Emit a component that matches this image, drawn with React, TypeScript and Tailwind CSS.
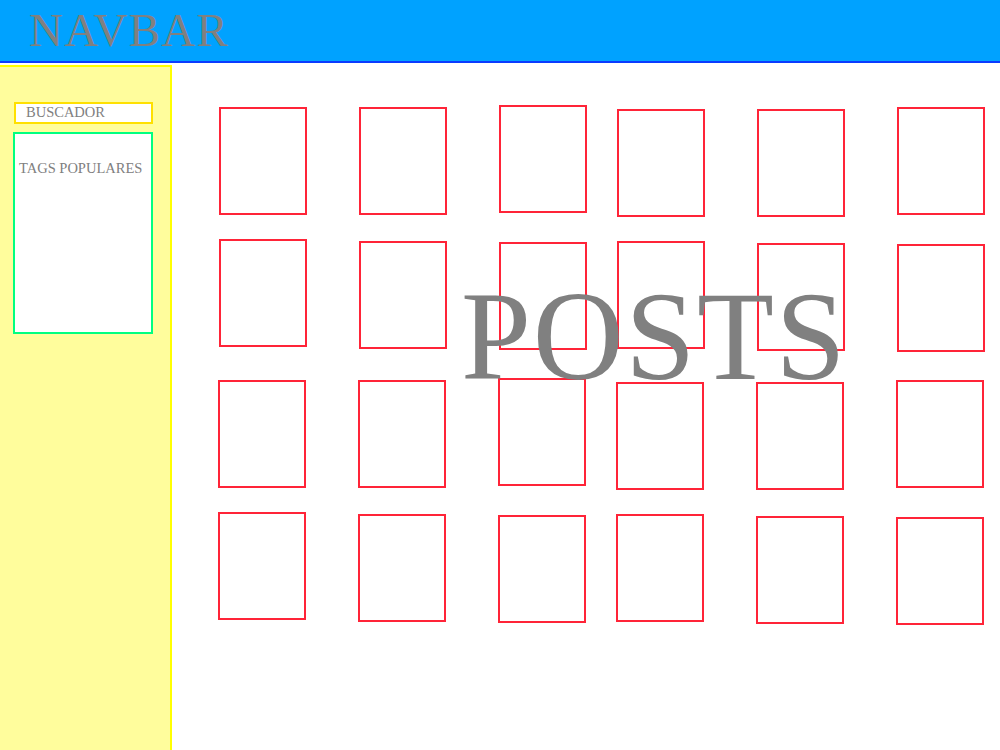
import React from "react";

// two rows of six cards, repeated twice; small offsets come from the sketch
const cardRows = [
  ["mt-[2px]", "mt-[2px]", "mt-0", "mt-[4px]", "mt-[4px]", "mt-[2px]"],
  ["mt-0", "mt-[2px]", "mt-[3px]", "mt-[2px]", "mt-[4px]", "mt-[5px]"],
];

const PostCard: React.FC<{ offset: string }> = ({ offset }) => (
  <div className={`w-[88px] h-[108px] shrink-0 border-2 border-[#ff2438] bg-white ${offset}`}></div>
);

const PostRow: React.FC<{ offsets: string[] }> = ({ offsets }) => (
  <div className="flex items-start gap-[30px] h-[134px]">
    <div className="flex items-start gap-[52px]">
      {offsets.slice(0, 3).map((o, i) => (
        <PostCard key={i} offset={o} />
      ))}
    </div>
    <div className="flex items-start gap-[52px]">
      {offsets.slice(3).map((o, i) => (
        <PostCard key={i} offset={o} />
      ))}
    </div>
  </div>
);

const Sidebar: React.FC = () => (
  <aside className="w-[172px] shrink-0 mt-[2px] bg-[#fffd9c] border-t-2 border-r-2 border-[#ffff00] pt-[35px]">
    <div className="ml-[14px] w-[139px] h-[22px] border-2 border-[#ffe000] bg-white pl-[10px]">
      <span className="block leading-[16px] text-[14.5px] text-[#808080]">BUSCADOR</span>
    </div>
    <div className="ml-[13px] mt-[8px] w-[140px] h-[202px] border-2 border-[#00ff80] bg-white pl-[4px] pt-[25px]">
      <span className="block leading-[18px] text-[14.5px] text-[#808080]">TAGS POPULARES</span>
    </div>
  </aside>
);

export default function App() {
  return (
    <div className="h-screen w-full flex flex-col bg-white overflow-hidden font-['Liberation_Serif','Times_New_Roman',serif]">
      <nav className="h-[63px] shrink-0 bg-[#00a2ff] border-b-2 border-[#0a3cff] pl-[29px] pt-[7px]">
        <span className="block leading-none text-[47px] tracking-[1.3px] text-[#808080]">NAVBAR</span>
      </nav>
      <div className="flex flex-1 min-h-0">
        <Sidebar />
        <main className="relative flex-1 pt-[42px] pl-[47px] flex flex-col gap-[5px]">
          <div className="flex flex-col">
            {cardRows.map((r, i) => (
              <PostRow key={i} offsets={r} />
            ))}
          </div>
          <div className="flex flex-col ml-[-1px]">
            {cardRows.map((r, i) => (
              <PostRow key={i} offsets={r} />
            ))}
          </div>
          <span className="absolute left-[289px] top-[211px] leading-none text-[126px] tracking-[1.6px] text-[#808080] pointer-events-none">
            POSTS
          </span>
        </main>
      </div>
    </div>
  );
}
